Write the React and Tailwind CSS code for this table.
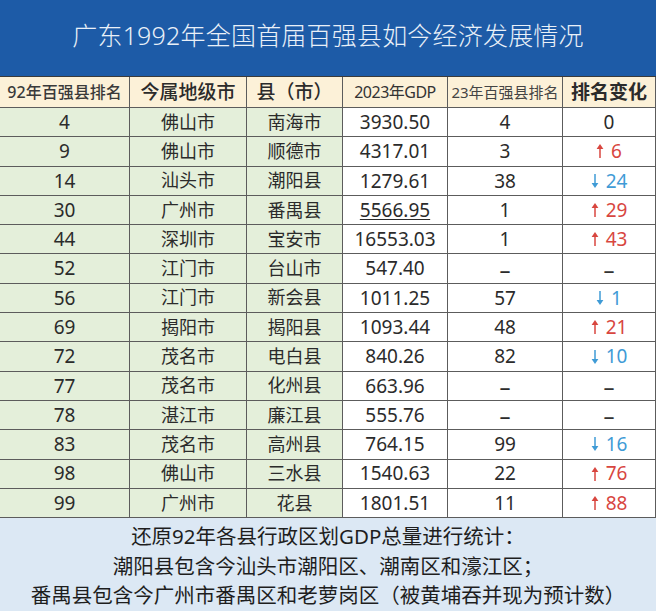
import React from 'react';

const cjk = '"Noto Sans", "Noto Sans CJK SC", sans-serif';

const rows = [
  ['4', '佛山市', '南海市', '3930.50', '4', { t: 'zero', n: '0' }],
  ['9', '佛山市', '顺德市', '4317.01', '3', { t: 'up', n: '6' }],
  ['14', '汕头市', '潮阳县', '1279.61', '38', { t: 'down', n: '24' }],
  ['30', '广州市', '番禺县', '5566.95', '1', { t: 'up', n: '29' }],
  ['44', '深圳市', '宝安市', '16553.03', '1', { t: 'up', n: '43' }],
  ['52', '江门市', '台山市', '547.40', '–', { t: 'none' }],
  ['56', '江门市', '新会县', '1011.25', '57', { t: 'down', n: '1' }],
  ['69', '揭阳市', '揭阳县', '1093.44', '48', { t: 'up', n: '21' }],
  ['72', '茂名市', '电白县', '840.26', '82', { t: 'down', n: '10' }],
  ['77', '茂名市', '化州县', '663.96', '–', { t: 'none' }],
  ['78', '湛江市', '廉江县', '555.76', '–', { t: 'none' }],
  ['83', '茂名市', '高州县', '764.15', '99', { t: 'down', n: '16' }],
  ['98', '佛山市', '三水县', '1540.63', '22', { t: 'up', n: '76' }],
  ['99', '广州市', '花县', '1801.51', '11', { t: 'up', n: '88' }],
];

function Arrow({ down }) {
  return (
    <svg width="8" height="14" viewBox="0 0 8 14" className={down ? 'rotate-180' : ''}>
      <polygon points="4,0 0.6,5 7.4,5" fill="currentColor" />
      <line x1="4" y1="4" x2="4" y2="14" stroke="currentColor" strokeWidth="1.5" />
    </svg>
  );
}

function Change({ c }) {
  if (c.t === 'none') return <span className="text-[22px] leading-none text-[#333]">–</span>;
  if (c.t === 'zero') return <span>{c.n}</span>;
  const up = c.t === 'up';
  return (
    <span className={`flex items-center gap-[7px] ${up ? 'text-[#d8463f]' : 'text-[#3f9bd6]'}`}>
      <Arrow down={!up} />
      <span>{c.n}</span>
    </span>
  );
}

const cell = 'flex items-center justify-center border-r border-b border-[#5c5c5c]';

export default function App() {
  return (
    <div className="w-[656px] h-[614px] overflow-hidden bg-white text-[#2b2b2b]" style={{ fontFamily: cjk }}>
      <div className="flex h-[77px] items-center justify-center bg-[#1d5ba7] pb-[5px] border-b border-[#3a3a3a]">
        <h1 className="text-[25px] font-light tracking-[0.2px] text-[#e9f0f8]">广东1992年全国首届百强县如今经济发展情况</h1>
      </div>

      <div className="grid grid-cols-[130px_117px_96px_105px_115px_93px]">
        <div className={`${cell} h-[31px] bg-[#fcf1d8] text-[16px] font-medium text-[#3a3a3a]`}>92年百强县排名</div>
        <div className={`${cell} h-[31px] bg-[#fcf1d8] text-[19px] font-medium`}>今属地级市</div>
        <div className={`${cell} h-[31px] bg-[#fcf1d8] text-[19px] font-medium`}>县（市）</div>
        <div className={`${cell} h-[31px] bg-[#fcf1d8] text-[16px] tracking-[-0.5px] text-[#333]`}>2023年GDP</div>
        <div className={`${cell} h-[31px] bg-[#fcf1d8] text-[15px] text-[#444]`}>23年百强县排名</div>
        <div className={`${cell} h-[31px] bg-[#fcf1d8] text-[19px] font-semibold`}>排名变化</div>

        {rows.map((r) => (
          <React.Fragment key={r[0]}>
            <div className={`${cell} h-[29.3px] bg-[#e4efda] text-[19px]`}>{r[0]}</div>
            <div className={`${cell} h-[29.3px] bg-[#e4efda] text-[18px]`}>{r[1]}</div>
            <div className={`${cell} h-[29.3px] bg-[#e4efda] text-[18px]`}>{r[2]}</div>
            <div className={`${cell} h-[29.3px] text-[19px]`}>
              <span className={r[0] === '30' ? 'underline underline-offset-2' : ''}>{r[3]}</span>
            </div>
            <div className={`${cell} h-[29.3px] text-[19px]`}>
              {r[4] === '–' ? <span className="text-[22px] leading-none">–</span> : r[4]}
            </div>
            <div className={`${cell} h-[29.3px] text-[19px]`}>
              <Change c={r[5]} />
            </div>
          </React.Fragment>
        ))}
      </div>

      <div className="flex flex-col items-center bg-[#dce8f4] pt-[4px] text-[20.5px] leading-[29.5px] text-[#1e1e1e]">
        <p>还原92年各县行政区划GDP总量进行统计：</p>
        <p>潮阳县包含今汕头市潮阳区、潮南区和濠江区；</p>
        <p className="whitespace-nowrap">番禺县包含今广州市番禺区和老萝岗区（被黄埔吞并现为预计数）</p>
      </div>
    </div>
  );
}
